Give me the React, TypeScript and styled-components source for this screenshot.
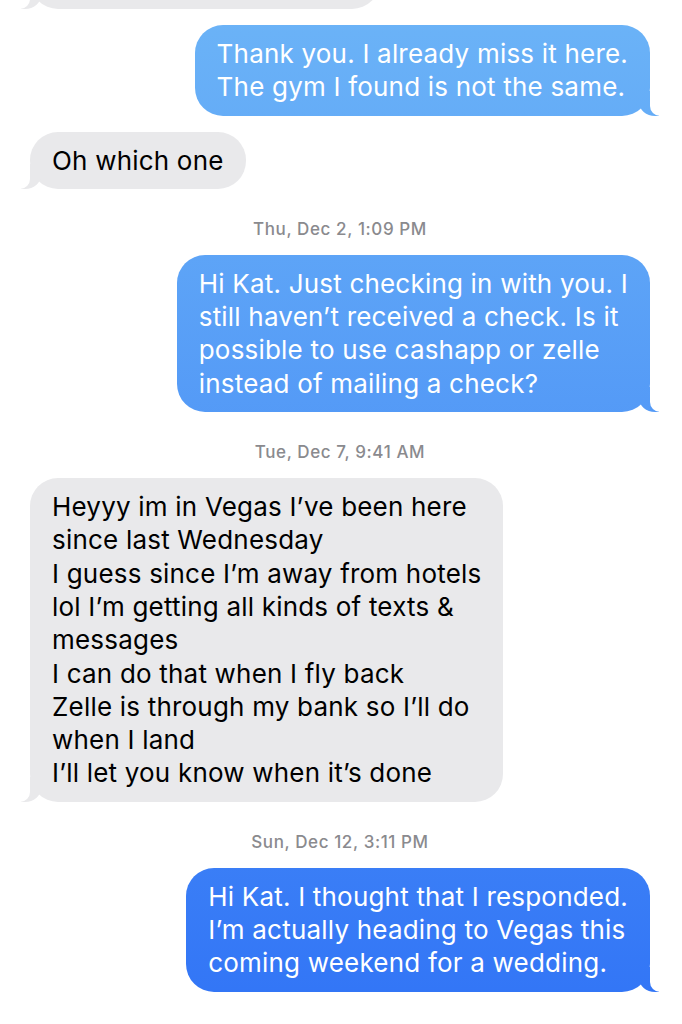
import React from 'react';
import styled, { createGlobalStyle, css } from 'styled-components';

type Side = 'me' | 'them';

interface Item {
  kind: 'msg' | 'time';
  side?: Side;
  text: string;
}

// thread content, line breaks kept as in the screenshot
const thread: Item[] = [
  { kind: 'msg', side: 'me', text: 'Thank you. I already miss it here.\nThe gym I found is not the same.' },
  { kind: 'msg', side: 'them', text: 'Oh which one' },
  { kind: 'time', text: 'Thu, Dec 2, 1:09 PM' },
  {
    kind: 'msg',
    side: 'me',
    text: 'Hi Kat. Just checking in with you. I\nstill haven\u2019t received a check. Is it\npossible to use cashapp or zelle\ninstead of mailing a check?',
  },
  { kind: 'time', text: 'Tue, Dec 7, 9:41 AM' },
  {
    kind: 'msg',
    side: 'them',
    text:
      'Heyyy im in Vegas I\u2019ve been here\nsince last Wednesday\nI guess since I\u2019m away from hotels\nlol I\u2019m getting all kinds of texts &\nmessages\nI can do that when I fly back\nZelle is through my bank so I\u2019ll do\nwhen I land\nI\u2019ll let you know when it\u2019s done',
  },
  { kind: 'time', text: 'Sun, Dec 12, 3:11 PM' },
  {
    kind: 'msg',
    side: 'me',
    text: 'Hi Kat. I thought that I responded.\nI\u2019m actually heading to Vegas this\ncoming weekend for a wedding.',
  },
];

const GlobalStyle = createGlobalStyle`
  html, body {
    margin: 0;
    background: #ffffff;
  }
  body {
    font-family: Inter, "Liberation Sans", sans-serif;
    -webkit-font-smoothing: antialiased;
  }
`;

const Thread = styled.div`
  display: flex;
  flex-direction: column;
  gap: 16px;
  padding: 0 32px 0 30px;
  height: 1024px;
  box-sizing: border-box;
  overflow: hidden;
`;

const Bubble = styled.div<{ $side: Side }>`
  position: relative;
  padding: 12px 22px;
  border-radius: 28px;
  font-size: 26px;
  line-height: 33.3px;
  letter-spacing: 0.2px;
  white-space: pre-line;

  &::before,
  &::after {
    content: '';
    position: absolute;
    bottom: 0;
    height: 25px;
  }
  &::before {
    width: 20px;
    background: inherit;
  }
  &::after {
    width: 26px;
    background: #ffffff;
  }

  ${({ $side }) =>
    $side === 'me'
      ? css`
          align-self: flex-end;
          color: #ffffff;
          background: linear-gradient(180deg, #6cb4f7 0%, #3174f6 100%) fixed;
          &::before {
            right: -9px;
            border-bottom-left-radius: 16px 14px;
          }
          &::after {
            right: -26px;
            border-bottom-left-radius: 10px;
          }
        `
      : css`
          align-self: flex-start;
          color: #000000;
          background: #e9e9eb;
          &::before {
            left: -9px;
            border-bottom-right-radius: 16px 14px;
          }
          &::after {
            left: -26px;
            border-bottom-right-radius: 10px;
          }
        `}
`;

// the bubble cut off by the top edge, only its lower rim shows
const CutBubble = styled(Bubble)`
  margin-top: -48px;
  width: 350px;
  height: 57px;
  box-sizing: border-box;
`;

const Stamp = styled.div`
  align-self: center;
  margin-top: 14px;
  font-size: 17px;
  line-height: 20px;
  font-weight: 500;
  letter-spacing: 0.6px;
  color: #8a8a8e;
`;

const App: React.FC = () => {
  return (
    <>
      <GlobalStyle />
      <Thread>
        <CutBubble $side="them" />
        {thread.map((item, i) =>
          item.kind === 'time' ? (
            <Stamp key={i}>{item.text}</Stamp>
          ) : (
            <Bubble key={i} $side={item.side!}>
              {item.text}
            </Bubble>
          ),
        )}
      </Thread>
    </>
  );
};

export default App;
